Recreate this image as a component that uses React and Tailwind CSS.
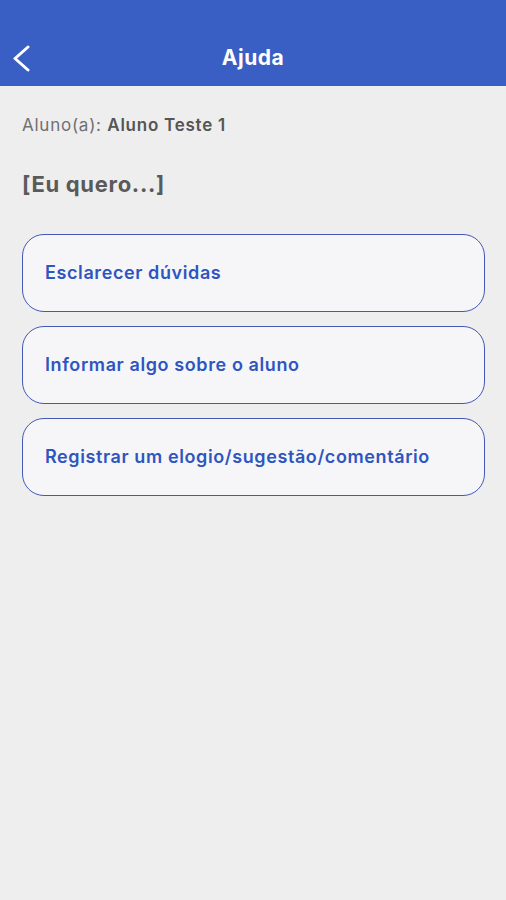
const OPTIONS = [
  "Esclarecer dúvidas",
  "Informar algo sobre o aluno",
  "Registrar um elogio/sugestão/comentário",
];

const App = () => {
  return (
    <div className="min-h-[900px] bg-[#eeeeee] font-['Inter',sans-serif]">
      <header className="relative flex h-[86px] items-end justify-center bg-[#3a5fc4] pb-[13px]">
        <button type="button" className="absolute left-[10px] top-[44px] text-white">
          <svg width="22" height="28" viewBox="0 0 22 28" fill="none">
            <polyline
              points="18,3 5,14.5 18,26"
              stroke="currentColor"
              strokeWidth="3"
              strokeLinecap="round"
              strokeLinejoin="round"
            />
          </svg>
        </button>
        <h1 className="text-[21px] font-bold tracking-[0.5px] text-white">Ajuda</h1>
      </header>

      <div className="px-[22px] pt-[27px]">
        <p className="text-[17px] tracking-[0.75px] text-[#707070]">
          Aluno(a): <span className="font-semibold text-[#555555]">Aluno Teste 1</span>
        </p>

        <h2 className="mt-[29px] text-[22px] font-bold tracking-[0.7px] text-[#5a5a5a]">[Eu quero...]</h2>

        <div className="mt-[33px] flex flex-col gap-[14px]">
          {OPTIONS.map((label) => (
            <button
              key={label}
              type="button"
              className="flex h-[78px] w-[463px] items-center rounded-[22px] border border-[#4457b4] bg-[#f6f6f8] px-[22px] text-left"
            >
              <span className="text-[18px] font-semibold tracking-[0.6px] text-[#2f55c0]">{label}</span>
            </button>
          ))}
        </div>
      </div>
    </div>
  );
};

export default App;
